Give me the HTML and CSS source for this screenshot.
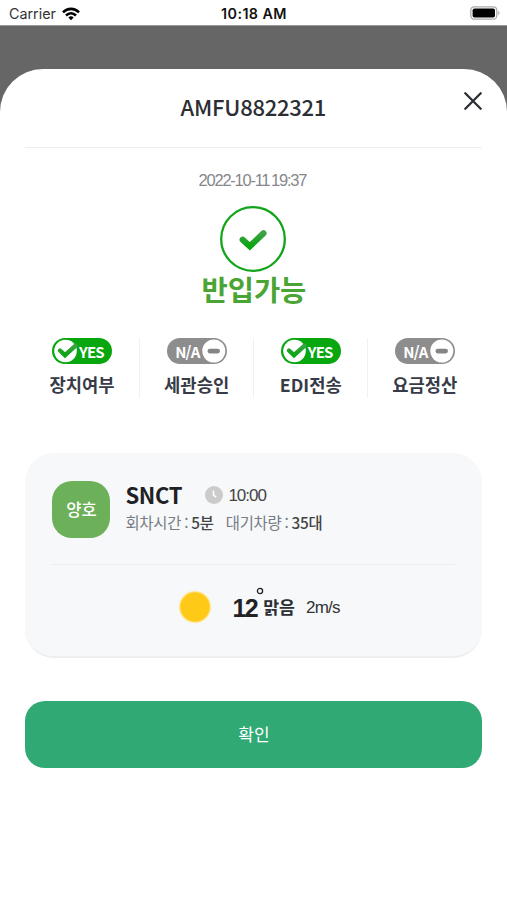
FILE: index.html
```html
<!DOCTYPE html>
<html lang="ko">
<head>
<meta charset="utf-8">
<meta name="viewport" content="width=device-width, initial-scale=1">
<title>AMFU8822321</title>
<link rel="stylesheet" href="styles.css">
</head>
<body>
<svg width="0" height="0" class="defs" aria-hidden="true">
  <defs>
    <linearGradient id="tick" x1="0" y1="0" x2="0" y2="1">
      <stop offset="0" stop-color="#3aa343"/>
      <stop offset="1" stop-color="#0aa512"/>
    </linearGradient>
    <radialGradient id="glow">
      <stop offset="0.82" stop-color="#ffc917"/>
      <stop offset="0.9" stop-color="#ffe38a"/>
      <stop offset="1" stop-color="#fff4cc" stop-opacity="0"/>
    </radialGradient>
    <symbol id="badge-yes" viewBox="0 0 60 26">
      <rect width="60" height="26" rx="13" fill="#08a60f"/>
      <circle cx="13.500" cy="13" r="11.300" fill="#fff"/>
      <path d="M8 12.500L13 17.200L23.300 7.800" fill="none" stroke="url(#tick)" stroke-width="4.400" stroke-linecap="round" stroke-linejoin="miter"/>
    </symbol>
    <symbol id="badge-na" viewBox="0 0 60 26">
      <rect width="60" height="26" rx="13" fill="#8d8d8d"/>
      <circle cx="46.800" cy="13" r="11.500" fill="#fff"/>
      <rect x="40.500" y="10.700" width="12.500" height="4.800" rx="2.400" fill="#858585"/>
    </symbol>
  </defs>
</svg>
<header class="status">
  <div class="carrier"><span>Carrier</span>
    <svg width="18" height="14" viewBox="0 0 18 14" fill="none" stroke="#000" stroke-width="2.600">
      <path d="M1 5.300C5.500 0.700 12.500 0.700 17 5.300"/>
      <path d="M4 8.500C7 5.600 11 5.600 14 8.500"/>
      <path d="M6.300 10.500Q9 8.200 11.700 10.500L9 13.300Z" fill="#000" stroke="none"/>
    </svg>
  </div>
  <div class="time">10:18 AM</div>
  <svg class="battery" width="30" height="14" viewBox="0 0 30 14">
    <rect x="0.800" y="0.800" width="26" height="12.400" rx="3.500" fill="#fff" stroke="#aaa" stroke-width="1.300"/>
    <rect x="2.600" y="2.500" width="22.400" height="9" rx="1.800" fill="#000"/>
    <path d="M28.200 4.500Q30.800 7 28.200 9.500Z" fill="#aaa"/>
  </svg>
</header>
<main class="backdrop">
  <section class="sheet">
    <div class="sheet-head">
      <h1>AMFU8822321</h1>
      <svg class="close" width="18" height="18" viewBox="0 0 18 18" fill="none" stroke="#2b2e33" stroke-width="2.300" stroke-linecap="round"><path d="M1.300 1.300L16.700 16.700M16.700 1.300L1.300 16.700"/></svg>
    </div>
    <div class="result">
      <time>2022-10-11 19:37</time>
      <svg class="ring" width="66" height="66" viewBox="0 0 66 66" fill="none">
        <circle cx="33" cy="33" r="31.800" stroke="#12a51a" stroke-width="2.300"/>
        <path d="M22.700 33.700L29.800 40.300L43.500 27.300" stroke="url(#tick)" stroke-width="6.200" stroke-linecap="round" stroke-linejoin="miter"/>
      </svg>
      <h2>반입가능</h2>
    </div>
    <div class="checks">
      <div class="check"><div class="badge yes"><svg width="60" height="26"><use href="#badge-yes"/></svg><span>YES</span></div><b>장치여부</b></div>
      <div class="check"><div class="badge na"><svg width="60" height="26"><use href="#badge-na"/></svg><span>N/A</span></div><b>세관승인</b></div>
      <div class="check"><div class="badge yes"><svg width="60" height="26"><use href="#badge-yes"/></svg><span>YES</span></div><b>EDI전송</b></div>
      <div class="check"><div class="badge na"><svg width="60" height="26"><use href="#badge-na"/></svg><span>N/A</span></div><b>요금정산</b></div>
    </div>
    <article class="card">
      <div class="terminal">
        <div class="grade">양호</div>
        <div class="info">
          <div class="name"><strong>SNCT</strong>
            <svg width="18" height="18" viewBox="0 0 18 18"><circle cx="9" cy="9" r="9" fill="#cbcbcb"/><path d="M8.500 4.500V9.300L11.300 11" fill="none" stroke="#fff" stroke-width="1.500"/></svg>
            <span class="clock">10:00</span></div>
          <div class="stats"><span class="turn">회차시간 : <b>5분</b></span><span class="wait">대기차량 : <b>35대</b></span></div>
        </div>
      </div>
      <div class="weather">
        <svg width="34" height="34" viewBox="0 0 34 34"><circle cx="17" cy="17" r="17" fill="url(#glow)"/></svg>
        <span class="temp">12</span>
        <svg class="degree" width="8" height="8" viewBox="0 0 8 8"><circle cx="4" cy="4" r="2.600" fill="none" stroke="#222" stroke-width="1.300"/></svg>
        <b class="sky">맑음</b>
        <span class="wind">2m/s</span>
      </div>
    </article>
    <button class="confirm" type="button">확인</button>
  </section>
</main>
</body>
</html>
```
FILE: styles.css
```css
* { box-sizing: border-box; }
body {
  margin: 0;
  height: 900px;
  display: flex;
  flex-direction: column;
  overflow: hidden;
  background: #fff;
  font-family: "Noto Sans CJK KR", sans-serif;
  color: #2b2e33;
}
svg { display: block; flex: none; }
.defs { position: absolute; }
h1, h2 { margin: 0; }
span, b, strong { white-space: nowrap; }
.status {
  height: 26px;
  flex: none;
  display: grid;
  grid-template-columns: 1fr auto 1fr;
  align-items: center;
  padding: 2px 7px 0 9px;
  border-bottom: 1px solid #999;
  font-family: Inter, sans-serif;
  font-size: 14.3px;
}
.carrier { display: flex; align-items: center; gap: 6px; color: #333; }
.time { font-weight: 600; color: #111; letter-spacing: 0.42px; margin-right: 1px; }
.battery { justify-self: end; margin-top: -2px; }
.backdrop { flex: 1; background: #666; padding-top: 43px; }
.sheet { height: 831px; background: #fff; border-radius: 43px 43px 0 0; padding: 0 24.600px 0 25.400px; }
.sheet-head {
  height: 79px;
  border-bottom: 1px solid #eee;
  display: grid;
  grid-template-columns: 18px 1fr 18px;
}
h1 {
  grid-column: 2;
  text-align: center;
  font-size: 22px;
  line-height: 30px;
  font-weight: 500;
  letter-spacing: -0.250px;
  margin: 22px 1px 0 0;
}
.close { margin-top: 23px; }
.result { display: flex; flex-direction: column; align-items: center; }
time {
  margin: 20px 3px 0 0;
  font: 16.5px/24px "Liberation Sans", sans-serif;
  letter-spacing: -1.25px;
  word-spacing: -1.500px;
  color: #85878d;
}
.ring { margin: 14px 1px 0 0; }
h2 { margin-top: -2px; font-size: 28.500px; line-height: 38px; font-weight: 700; color: #4aa535; }
.checks { height: 60px; margin: 30px 1px 0 -0.400px; display: grid; grid-template-columns: repeat(4, 1fr); }
.check { display: flex; flex-direction: column; align-items: center; }
.check + .check { border-left: 1px solid #f1f1f1; }
.badge { display: grid; width: 60px; height: 26px; }
.badge svg, .badge span { grid-area: 1 / 1; }
.badge span { color: #fff; font-size: 15px; line-height: 27px; font-weight: 700; letter-spacing: -0.800px; }
.yes span { padding-left: 27px; }
.na span { padding-left: 8.500px; }
.check b { margin-top: 8px; font-size: 17.700px; line-height: 24px; font-weight: 700; color: #373b47; }
.card {
  height: 205px;
  margin-top: 55px;
  padding: 0 27px;
  background: #f6f8fa;
  border-radius: 29px;
  border-bottom: 2px solid #eceeef;
}
.terminal { height: 112px; padding-top: 28px; display: flex; gap: 15px; border-bottom: 1px solid #ebedef; }
.grade {
  width: 58px;
  height: 57px;
  border-radius: 20px;
  background: #6cb05a;
  color: #fff;
  font-size: 16.500px;
  font-weight: 500;
  line-height: 56px;
  text-align: center;
}
.name { height: 28px; display: flex; align-items: center; }
.name strong { width: 80px; font-size: 22px; line-height: 26px; height: 28px; font-weight: 700; letter-spacing: -0.350px; color: #202124; }
.clock { margin: 2px 0 0 5px; font: 17px/28px "Liberation Sans", sans-serif; letter-spacing: -1px; color: #444; }
.stats { display: flex; gap: 12px; font-size: 15.400px; line-height: 27px; letter-spacing: -0.200px; color: #777b83; }
.stats b { font-weight: 500; color: #444; }
.stats span { word-spacing: -1.200px; }
.weather { height: 84px; display: flex; align-items: center; padding-left: 126px; }
.temp { margin: 2px 0 0 20px; font: bold 25px/32px "Liberation Sans", sans-serif; letter-spacing: -1.500px; color: #222; }
.degree { margin: -32px 0 0 -1px; }
.sky { font-size: 17.300px; line-height: 28px; margin: -1px 0 0 -1px; }
.wind { margin: 2px 0 0 11px; font: 17px/28px "Liberation Sans", sans-serif; letter-spacing: -0.800px; color: #333; }
.confirm {
  display: block;
  width: 100%;
  height: 67px;
  margin-top: 43px;
  padding: 0 0 2px;
  border: 0;
  border-radius: 20px;
  background: #31a975;
  color: #fff;
  font: 400 17px/65px "Noto Sans CJK KR", sans-serif;
}
```
